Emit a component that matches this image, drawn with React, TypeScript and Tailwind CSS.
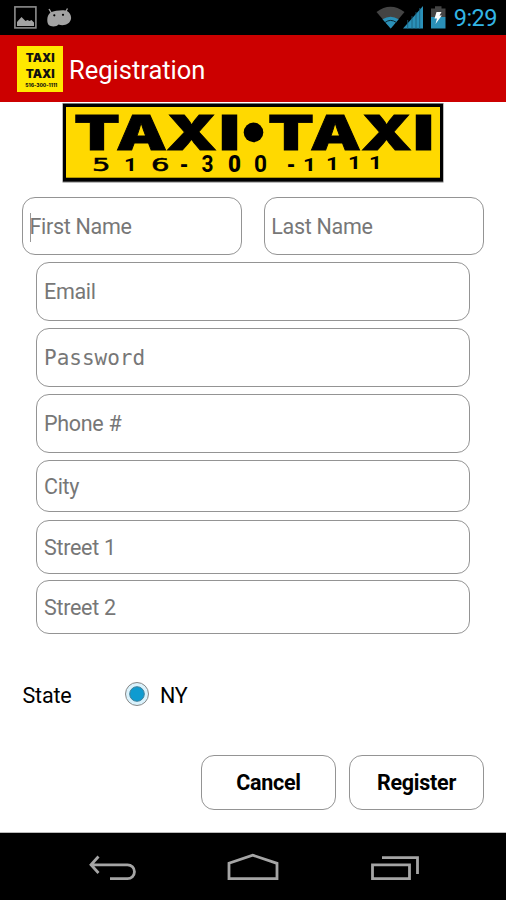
import type { ReactNode } from 'react';

type GlyphProps = { ch: string; x: number; y: number; w: number; size: number; weight?: number; family?: string; stroke?: number };

/* One sign letter, stretched to the width of the painted original. */
function Glyph({ ch, x, y, w, size, weight = 900, family = 'Inter, sans-serif', stroke = 0 }: GlyphProps) {
  return (
    <text x={x} y={y} fontSize={size} fontWeight={weight} fontFamily={family} textLength={w} lengthAdjust="spacingAndGlyphs" stroke="#000" strokeWidth={stroke}>
      {ch}
    </text>
  );
}

const wide = '"DejaVu Sans", sans-serif';
const narrow = 'Roboto, sans-serif';

const signLetters: GlyphProps[] = [
  { ch: 'T', x: 74, y: 150, w: 46, size: 48, stroke: 0.8 },
  { ch: 'A', x: 116, y: 150, w: 51, size: 48, stroke: 0.8 },
  { ch: 'X', x: 166, y: 150, w: 51, size: 48, stroke: 0.8 },
  { ch: 'I', x: 219, y: 150, w: 21, size: 48, stroke: 0.8 },
  { ch: 'T', x: 268, y: 150, w: 46, size: 48, stroke: 0.8 },
  { ch: 'A', x: 310, y: 150, w: 51, size: 48, stroke: 0.8 },
  { ch: 'X', x: 361, y: 150, w: 51, size: 48, stroke: 0.8 },
  { ch: 'I', x: 413, y: 150, w: 21, size: 48, stroke: 0.8 },
];

const signDigits: GlyphProps[] = [
  { ch: '5', x: 92, y: 171, w: 18.5, size: 17, weight: 400, family: wide, stroke: 0.5 },
  { ch: '1', x: 124, y: 171, w: 13, size: 18, weight: 700, family: narrow },
  { ch: '6', x: 151, y: 171, w: 18.5, size: 17, weight: 400, family: wide, stroke: 0.5 },
  { ch: '-', x: 180, y: 171, w: 8, size: 20, weight: 700, family: wide },
  { ch: '3', x: 201.5, y: 172, w: 12, size: 23, weight: 700, family: narrow },
  { ch: '0', x: 228, y: 172, w: 13, size: 23, weight: 900, family: narrow },
  { ch: '0', x: 254, y: 172, w: 13, size: 23, weight: 700, family: narrow },
  { ch: '-', x: 287, y: 171, w: 8, size: 20, weight: 700, family: wide },
  { ch: '1', x: 303, y: 170.5, w: 13, size: 18.5, weight: 700, family: narrow },
  { ch: '1', x: 326, y: 170, w: 13, size: 18.5, weight: 700, family: narrow },
  { ch: '1', x: 348, y: 169.3, w: 13, size: 18.5, weight: 700, family: narrow },
  { ch: '1', x: 369, y: 168.7, w: 13, size: 18.5, weight: 700, family: narrow },
];

function StatusBar() {
  return (
    <div className="flex h-[35px] shrink-0 items-center bg-black pr-[9px] pl-[14px]">
      <svg width="23" height="23" viewBox="0 0 23 23" className="shrink-0">
        <rect x="0.9" y="0.9" width="21" height="21" fill="none" stroke="#8d8d8d" strokeWidth="1.6" />
        <path d="M3 20V16L7.500 11L11.500 15L13.500 14L15.500 15L17.500 14L20 16.500V20Z" fill="#a3a3a3" />
      </svg>
      <svg width="26" height="20" viewBox="0 0 26 20" className="ml-[10px] shrink-0" fill="#a3a3a3">
        <path d="M2 1L5 6M20.5 0.5L18 5" stroke="#a3a3a3" strokeWidth="1.4" />
        <path d="M3.500 4.500C8 2.500 17 1.500 20 3C23 4.500 24.500 8 24 11C23 16 17 18.500 11.500 16.500C10 18.800 4 19.300 1.500 16.800C-0.500 14 -0.200 7 3.500 4.500Z" />
        <circle cx="7.300" cy="7.300" r="1.100" fill="#000" />
        <circle cx="16" cy="6.800" r="1.100" fill="#000" />
      </svg>
      <div className="flex-1" />
      <svg width="70" height="24" viewBox="375 6 70 24" className="mr-[8px] shrink-0">
        <path d="M375.500 12Q389.500 1.500 403.500 12L389.700 28.500Z" fill="#444" />
        <path d="M381.500 19.300Q389.500 14 397.700 19.300L389.700 28.500Z" fill="#2a90b8" />
        <path d="M384 22.500Q389.500 18.300 395.500 22.500" stroke="#0a2530" strokeWidth="1" fill="none" />
        <path d="M402 28.500L422 6V28.500Z" fill="#2a90b8" />
        <path d="M406.700 20V29M411 16V29M415 12V29M418.700 8V29" stroke="#1b5c77" strokeWidth="0.800" />
        <path d="M430 8.500H434V6.300H440.500V8.500H444.500V17H430Z" fill="#444" />
        <rect x="430" y="17" width="14.500" height="11.500" fill="#2a90b8" />
        <path d="M435.500 12H440.500L438.500 15.500H440.800L434.500 24L436 18.500H433.500Z" fill="#fff" />
      </svg>
      <span className="mt-px text-[23.5px] leading-[35px] tracking-[-0.5px] text-[#33b5e5]">9:29</span>
    </div>
  );
}

function AppIcon() {
  return (
    <svg width="46" height="46" viewBox="0 0 46 46" className="shrink-0">
      <rect width="46" height="46" fill="#ffe800" />
      <g fill="#111">
        <text x="8.800" y="16.300" fontSize="11.500" fontWeight="900" fontFamily="Inter, sans-serif" textLength="29" lengthAdjust="spacingAndGlyphs">TAXI</text>
        <text x="8.800" y="32" fontSize="11.500" fontWeight="900" fontFamily="Inter, sans-serif" textLength="29" lengthAdjust="spacingAndGlyphs">TAXI</text>
        <text x="8.300" y="40.800" fontSize="5" fontWeight="800" fontFamily="Inter, sans-serif" textLength="32" lengthAdjust="spacingAndGlyphs">516-300-1111</text>
      </g>
    </svg>
  );
}

function TaxiSign() {
  return (
    <svg width="382" height="80" viewBox="62 103 382 80" className="mx-auto block shrink-0">
      <rect x="62.500" y="103" width="381" height="79.500" fill="#777" />
      <rect x="63" y="104" width="380" height="77.500" fill="#000" />
      <rect x="66" y="107" width="374" height="70.700" fill="#ffd900" />
      {signLetters.map((g, i) => (
        <Glyph key={i} {...g} />
      ))}
      <circle cx="253.500" cy="132.400" r="9.800" />
      {signDigits.map((g, i) => (
        <Glyph key={i} {...g} />
      ))}
    </svg>
  );
}

function Field({ className, children }: { className: string; children: ReactNode }) {
  return (
    <div className={`flex items-center rounded-[13px] border border-[#949494] pt-[2px] text-[21.5px] tracking-[-0.3px] text-[#777] ${className}`}>
      {children}
    </div>
  );
}

export default function App() {
  return (
    <div className="flex h-[900px] w-[506px] flex-col overflow-hidden bg-white font-['Roboto',sans-serif]">
      <StatusBar />
      <header className="flex h-[67px] shrink-0 items-center bg-[#cc0000] pl-[17px]">
        <AppIcon />
        <h1 className="mt-[2px] ml-[6px] text-[25.5px] leading-[30px] text-white">Registration</h1>
      </header>
      <main className="flex flex-1 flex-col border-b border-[#bbb] pt-px">
        <TaxiSign />
        <div className="mt-[14px] flex gap-[22px] pr-[22px] pl-[22px]">
          <Field className="h-[58px] flex-1 pl-[6.5px]">
            <span className="-mr-px h-[29px] w-px bg-[#999]" />
            First Name
          </Field>
          <Field className="h-[58px] flex-1 pl-[6px]">Last Name</Field>
        </div>
        <div className="mx-[36px] mt-[7px] flex flex-col">
          <Field className="h-[59px] pl-[7px]">Email</Field>
          <Field className="mt-[7px] h-[59px] pl-[7px] font-['DejaVu_Sans_Mono',monospace]">
            <span className="text-[21px] tracking-normal">Password</span>
          </Field>
          <Field className="mt-[7px] h-[59px] pl-[7px]">Phone #</Field>
          <Field className="mt-[7px] h-[52px] pl-[7px]">City</Field>
          <Field className="mt-[8px] h-[54px] pl-[7px]">Street 1</Field>
          <Field className="mt-[6px] h-[54px] pl-[7px]">Street 2</Field>
        </div>
        <div className="mt-[46px] flex h-[30px] items-center pl-[22px] text-[21.5px] text-black">
          <span className="mt-[2px] w-[102px] pl-[0.5px] tracking-[-0.2px]">State</span>
          <svg width="26" height="26" viewBox="0 0 26 26" className="-mt-[2px] shrink-0">
            <circle cx="13" cy="13" r="11.500" fill="#daf2fc" stroke="#888" strokeWidth="1" />
            <circle cx="13" cy="13" r="7.300" fill="#0f9bd0" stroke="#3f7f99" strokeWidth="1" />
          </svg>
          <span className="mt-[2px] ml-[10px] tracking-[-0.3px]">NY</span>
        </div>
        <div className="mt-[45px] flex justify-end gap-[13px] pr-[22px] text-[21.5px] font-bold tracking-[-0.25px] text-black">
          <button className="h-[55px] w-[135px] rounded-[13px] border border-[#949494] pt-[2px]">Cancel</button>
          <button className="h-[55px] w-[135px] rounded-[13px] border border-[#949494] pt-[2px]">Register</button>
        </div>
      </main>
      <nav className="flex h-[67px] shrink-0 bg-black">
        <svg width="506" height="67" viewBox="0 833 506 67" fill="none" stroke="#a5a5a5" strokeWidth="2.800">
          <path d="M91 864.800H127.500A6.900 6.900 0 0 1 127.500 878.700H110M98.500 856.500L91 864.800L98.500 873" />
          <path d="M229 878.700V863.300L252.700 855.200L277 863.300V878.700Z" />
          <path d="M372.500 864.800H409.500V878.700H372.500ZM382 857.700H417.500V874" />
        </svg>
      </nav>
    </div>
  );
}
